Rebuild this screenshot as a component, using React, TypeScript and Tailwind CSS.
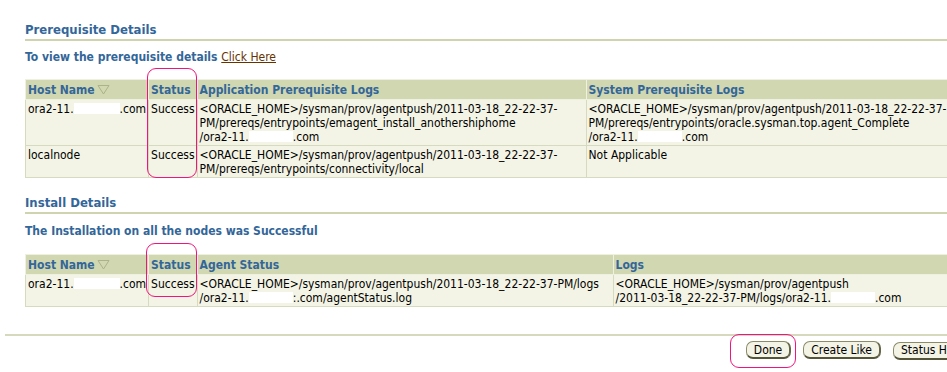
import React from 'react';

function Blank({ className }: { className: string }) {
  return <span className={`inline-block h-[11px] align-[-1px] bg-white ${className}`} />;
}

function SortIcon() {
  return (
    <svg width="13" height="11" viewBox="0 0 13 11" className="inline-block ml-[2px] -mt-[2px] align-middle">
      <path d="M1 1.5 H12 L6.5 10 Z" fill="none" stroke="#aab38a" strokeWidth="1" />
    </svg>
  );
}

function Th({ children, className = '' }: { children: React.ReactNode; className?: string }) {
  return (
    <th className={`h-[20px] px-[2px] text-left align-middle font-bold text-[#336699] bg-[#d1d7b0] border border-[#eef0e0] whitespace-nowrap ${className}`}>
      {children}
    </th>
  );
}

function Td({ children, className = '' }: { children: React.ReactNode; className?: string }) {
  return (
    <td className={`px-[2px] pt-[2px] pb-[1px] align-top bg-[#f3f4e5] border border-[#d6dbbf] whitespace-nowrap ${className}`}>
      {children}
    </td>
  );
}

function Section({ title }: { title: string }) {
  return (
    <div className="ml-[25px] border-b-2 border-[#cfd3ae] pb-[1px]">
      <h2 className="text-[13px] font-bold text-[#336699] leading-[16px]">{title}</h2>
    </div>
  );
}

function Ring({ className }: { className: string }) {
  return <div className={`absolute rounded-[9px] border-[1.5px] border-[#f0157e] pointer-events-none ${className}`} />;
}

function Button({ label }: { label: string }) {
  return (
    <button className="h-[18px] px-[7px] rounded-[7px] bg-[#f4f4e6] border border-[#8b8b68] border-b-[2px] border-r-[2px] border-b-[#55553a] border-r-[#66664a] text-[12px] leading-[14px] text-black whitespace-nowrap">
      {label}
    </button>
  );
}

export default function App() {
  const root = 'relative w-[947px] h-[372px] overflow-hidden bg-white text-[12px] text-black';
  return (
    <div className={root} style={{ fontFamily: '"DejaVu Sans Condensed", "DejaVu Sans", sans-serif', fontStretch: 'condensed' }}>
      <div className="w-[1100px] pt-[22px]">
        <Section title="Prerequisite Details" />
        <p className="ml-[25px] mt-[9px] text-[12px] font-bold text-[#336699] leading-[15px]">
          To view the prerequisite details{' '}
          <a className="font-normal text-[#663300] underline">Click Here</a>
        </p>

        <table className="ml-[25px] mt-[14px] border-collapse leading-[14px]">
          <thead>
            <tr>
              <Th className="w-[122px]">Host Name<SortIcon /></Th>
              <Th className="w-[48px] border-[#b9bd9e]">Status</Th>
              <Th className="w-[389px]">Application Prerequisite Logs</Th>
              <Th className="w-[480px]">System Prerequisite Logs</Th>
            </tr>
          </thead>
          <tbody>
            <tr>
              <Td>ora2-11.<Blank className="w-[46px]" />.com</Td>
              <Td>Success</Td>
              <Td>
                &lt;ORACLE_HOME&gt;/sysman/prov/agentpush/2011-03-18_22-22-37-<br />
                PM/prereqs/entrypoints/emagent_install_anothershiphome<br />
                /ora2-11.<Blank className="w-[44px]" />.com
              </Td>
              <Td>
                &lt;ORACLE_HOME&gt;/sysman/prov/agentpush/2011-03-18_22-22-37-<br />
                PM/prereqs/entrypoints/oracle.sysman.top.agent_Complete<br />
                /ora2-11.<Blank className="w-[44px]" />.com
              </Td>
            </tr>
            <tr>
              <Td className="pb-[3px]">localnode</Td>
              <Td>Success</Td>
              <Td>
                &lt;ORACLE_HOME&gt;/sysman/prov/agentpush/2011-03-18_22-22-37-<br />
                PM/prereqs/entrypoints/connectivity/local
              </Td>
              <Td>Not Applicable</Td>
            </tr>
          </tbody>
        </table>

        <div className="mt-[17px]">
          <Section title="Install Details" />
        </div>
        <p className="ml-[25px] mt-[10px] text-[12px] font-bold text-[#336699] leading-[15px]">
          The Installation on all the nodes was Successful
        </p>

        <table className="ml-[25px] mt-[15px] border-collapse leading-[14px]">
          <thead>
            <tr>
              <Th className="w-[122px]">Host Name<SortIcon /></Th>
              <Th className="w-[48px] border-[#b9bd9e]">Status</Th>
              <Th className="w-[416px]">Agent Status</Th>
              <Th className="w-[420px]">Logs</Th>
            </tr>
          </thead>
          <tbody>
            <tr>
              <Td>ora2-11.<Blank className="w-[46px]" />.com</Td>
              <Td>Success</Td>
              <Td>
                &lt;ORACLE_HOME&gt;/sysman/prov/agentpush/2011-03-18_22-22-37-PM/logs<br />
                /ora2-11.<Blank className="w-[44px]" />:.com/agentStatus.log
              </Td>
              <Td>
                &lt;ORACLE_HOME&gt;/sysman/prov/agentpush<br />
                /2011-03-18_22-22-37-PM/logs/ora2-11.<Blank className="w-[44px]" />.com
              </Td>
            </tr>
          </tbody>
        </table>

        <div className="ml-[5px] mt-[27px] border-t-2 border-[#d6d9bd]" />
        <div className="w-[947px] flex justify-end gap-[12px] pt-[5px]">
          <Button label="Done" />
          <Button label="Create Like" />
          <div className="w-[54px] overflow-hidden">
            <Button label="Status History" />
          </div>
        </div>
      </div>

      <Ring className="left-[147px] top-[68px] w-[50px] h-[110px]" />
      <Ring className="left-[146px] top-[243px] w-[51px] h-[54px]" />
      <Ring className="left-[730px] top-[334px] w-[66px] h-[34px]" />
    </div>
  );
}
